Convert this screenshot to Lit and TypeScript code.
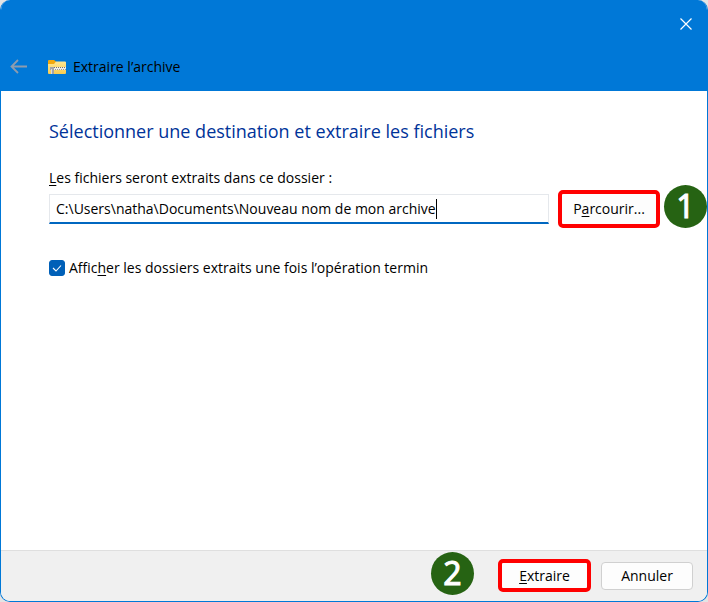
import { LitElement, html, css, svg } from "lit";
import { customElement, property, state } from "lit/decorators.js";

const backIcon = svg`<svg width="18" height="16" viewBox="0 0 18 16" aria-hidden="true">
  <path d="M8 1 L1.5 7.5 L8 14 M1.5 7.5 H17" fill="none" stroke="#8d9cae" stroke-width="1.8" />
</svg>`;

const closeIcon = svg`<svg width="12" height="12" viewBox="0 0 12 12" aria-hidden="true">
  <path d="M0.5 0.5 L11.5 11.5 M11.5 0.5 L0.5 11.5" fill="none" stroke="#fff" stroke-width="1.2" />
</svg>`;

const zipIcon = svg`<svg width="18" height="14" viewBox="0 0 18 14" aria-hidden="true">
  <defs>
    <linearGradient id="folder" x1="0" y1="0" x2="0" y2="1">
      <stop offset="0" stop-color="#ffe793" />
      <stop offset="1" stop-color="#f8cc50" />
    </linearGradient>
  </defs>
  <path d="M0 1 Q0 0 1 0 H6 L8 1.5 V5 H0 Z" fill="#f2a80d" />
  <path d="M0 4 H6 L8 1.5 H17 Q18 1.5 18 2.5 V13 Q18 14 17 14 H1 Q0 14 0 13 Z" fill="url(#folder)" />
  <path d="M4 7 H18 V10 H4 Z" fill="#f0eee8" />
  <path d="M6 7.5 H18" stroke="#77736b" stroke-width="1" stroke-dasharray="1 1" />
  <path d="M5 9.5 H18" stroke="#a09c92" stroke-width="1" stroke-dasharray="1 1" />
  <path d="M2 7 H6 V14 H3 V10 H2 Z" fill="#a3a4a9" />
  <path d="M3 9 H4 V14 H3 Z" fill="#dcdce0" />
</svg>`;

const checkIcon = svg`<svg class="tick" width="16" height="16" viewBox="0 0 16 16" aria-hidden="true">
  <path d="M4 8 L7 11 L12 5.5" fill="none" stroke="#fff" stroke-width="1.1" />
</svg>`;

@customElement("step-badge")
export class StepBadge extends LitElement {
  @property({ type: Number }) step = 1;

  static styles = css`
    :host {
      display: block;
      width: 43px;
      height: 43px;
      border-radius: 50%;
      background: #266313;
      color: #fff;
      text-align: center;
      font: 400 32px/41px "Noto Sans", "Open Sans", sans-serif;
      -webkit-text-stroke: 1px #fff;
    }
  `;

  render() {
    return html`${this.step}`;
  }
}

@customElement("app-root")
export class AppRoot extends LitElement {
  @state() private path = "C:\\Users\\natha\\Documents\\Nouveau nom de mon archive";
  @state() private reveal = true;

  static styles = css`
    :host {
      display: block;
      background: #e4e4e4;
      color: #000;
      font: 14px/20px "Open Sans", "Noto Sans", sans-serif;
    }
    * {
      box-sizing: border-box;
    }
    .window {
      display: flex;
      flex-direction: column;
      min-height: 100vh;
      border: 1px solid #0078d7;
      border-top: 0;
      border-radius: 10px;
      overflow: hidden;
      background: #fff;
    }
    header {
      background: #0078d7;
      height: 91px;
      display: flex;
      flex-direction: column;
      justify-content: space-between;
      padding: 16px 13px 14px 9px;
    }
    .icon-button {
      display: flex;
      border: 0;
      padding: 0;
      background: none;
    }
    .close {
      align-self: flex-end;
      padding: 2px;
    }
    .title {
      display: flex;
      align-items: center;
    }
    .title .name {
      display: flex;
      align-items: center;
      gap: 7px;
      margin-left: 20px;
    }
    main {
      flex: 1;
      padding: 26px 47px 24px 48px;
    }
    h1 {
      margin: 0 0 23px;
      color: #003399;
      font-size: 18px;
      line-height: 28px;
      font-weight: 400;
    }
    .label {
      display: block;
      margin-bottom: 2px;
    }
    .row {
      display: flex;
      align-items: center;
      gap: 9px;
    }
    .field {
      flex: 1;
      display: flex;
      align-items: center;
      height: 30px;
      padding-left: 6px;
      border: 1px solid #e5e8ec;
      border-bottom: 2px solid #0067c0;
      overflow: hidden;
    }
    .field input {
      field-sizing: content;
      min-width: 0;
      border: 0;
      padding: 0;
      outline: 0;
      background: none;
      color: inherit;
      font: inherit;
      caret-color: transparent;
    }
    .caret {
      flex: none;
      width: 1px;
      height: 20px;
      background: #000;
    }
    .button {
      display: block;
      height: 28px;
      border: 1px solid #d0d0d0;
      border-radius: 4px;
      padding: 0;
      background: #fdfdfd;
      color: inherit;
      font: inherit;
    }
    .step {
      position: relative;
    }
    .step step-badge {
      position: absolute;
    }
    .step .button {
      border: 4px solid #f00;
      border-radius: 5px;
    }
    .step .browse {
      width: 102px;
      height: 38px;
    }
    .step .after {
      top: -5px;
      left: calc(100% + 4px);
    }
    .step .extract {
      width: 93px;
      height: 33px;
    }
    .step .before {
      top: -7px;
      right: calc(100% + 24px);
    }
    .check {
      display: flex;
      align-items: center;
      gap: 4px;
      margin-top: 30px;
    }
    .box {
      display: grid;
      flex: none;
    }
    .box > * {
      grid-area: 1 / 1;
    }
    .box input {
      appearance: none;
      width: 16px;
      height: 16px;
      margin: 0;
      border: 1px solid #868686;
      border-radius: 3px;
    }
    .box input:checked {
      border-color: #0060b8;
      background: #0060b8;
    }
    .tick {
      pointer-events: none;
    }
    u {
      text-underline-offset: 2px;
    }
    footer {
      display: flex;
      align-items: center;
      justify-content: flex-end;
      gap: 10px;
      height: 51px;
      padding: 0 14px 1px;
      border-top: 1px solid #dfdfdf;
      background: #f0f0f0;
    }
    .cancel {
      width: 92px;
    }
  `;

  render() {
    return html`
      <div class="window">
        <header>
          <button class="icon-button close" aria-label="Fermer">${closeIcon}</button>
          <div class="title">
            <button class="icon-button" aria-label="Retour">${backIcon}</button>
            <span class="name">${zipIcon}<span>Extraire l’archive</span></span>
          </div>
        </header>
        <main>
          <h1>Sélectionner une destination et extraire les fichiers</h1>
          <label class="label" for="path"><u>L</u>es fichiers seront extraits dans ce dossier :</label>
          <div class="row">
            <div class="field">
              <input
                id="path"
                type="text"
                .value=${this.path}
                @input=${(e: Event) => (this.path = (e.target as HTMLInputElement).value)}
              />
              <span class="caret"></span>
            </div>
            <div class="step">
              <button class="button browse">P<u>a</u>rcourir...</button>
              <step-badge class="after" .step=${1}></step-badge>
            </div>
          </div>
          <label class="check">
            <span class="box">
              <input
                type="checkbox"
                .checked=${this.reveal}
                @change=${(e: Event) => (this.reveal = (e.target as HTMLInputElement).checked)}
              />
              ${this.reveal ? checkIcon : ""}
            </span>
            <span>Affic<u>h</u>er les dossiers extraits une fois l’opération termin</span>
          </label>
        </main>
        <footer>
          <div class="step">
            <step-badge class="before" .step=${2}></step-badge>
            <button class="button extract"><u>E</u>xtraire</button>
          </div>
          <button class="button cancel">Annuler</button>
        </footer>
      </div>
    `;
  }
}
